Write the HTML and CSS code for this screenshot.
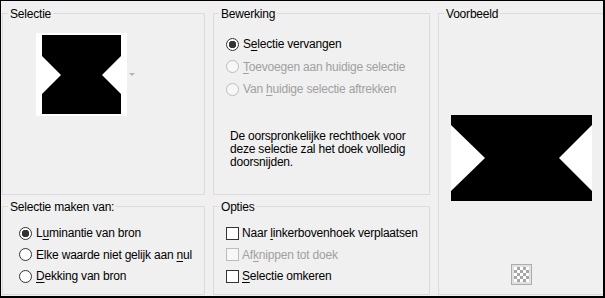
FILE: index.html
```html
<!DOCTYPE html>
<html>
<head>
    <title>Selectie maken</title>
    <meta charset="utf-8">
    <link rel="stylesheet" href="styles.css">
</head>
<body>
    <div class="dialog">
        <section class="group selectie">
            <h2 class="group-title">Selectie</h2>
            <div class="source">
                <svg class="thumb" width="91" height="83" viewBox="0 0 91 83">
                    <rect width="91" height="83" fill="#ffffff"/>
                    <polygon points="6,2 85,2 85,23 66,42 85,61 85,81 6,81 6,61 25,42 6,23" fill="#000000"/>
                </svg>
                <span class="drop-arrow"></span>
            </div>
        </section>

        <section class="group bewerking">
            <h2 class="group-title">Bewerking</h2>
            <div class="options">
                <label class="opt"><span class="radio checked"></span><span>S<u>e</u>lectie vervangen</span></label>
                <label class="opt disabled"><span class="radio"></span><span><u>T</u>oevoegen aan huidige selectie</span></label>
                <label class="opt disabled"><span class="radio"></span><span>Van <u>h</u>uidige selectie aftrekken</span></label>
            </div>
            <p class="note">De oorspronkelijke rechthoek voor<br>deze selectie zal het doek volledig<br>doorsnijden.</p>
        </section>

        <section class="group voorbeeld">
            <h2 class="group-title">Voorbeeld</h2>
            <svg class="preview" width="141" height="86" viewBox="0 0 141 86">
                <rect width="141" height="86" fill="#ffffff"/>
                <polygon points="0,0 141,0 141,10 108,43 141,76 141,86 0,86 0,76 34,43 0,10" fill="#000000"/>
            </svg>
            <button class="checker-btn"><span class="checker"></span></button>
        </section>

        <section class="group maken">
            <h2 class="group-title">Selectie maken van:</h2>
            <div class="options">
                <label class="opt"><span class="radio checked"></span><span>L<u>u</u>minantie van bron</span></label>
                <label class="opt"><span class="radio"></span><span>Elke waarde niet gelijk aan <u>n</u>ul</span></label>
                <label class="opt"><span class="radio"></span><span><u>D</u>ekking van bron</span></label>
            </div>
        </section>

        <section class="group opties">
            <h2 class="group-title">Opties</h2>
            <div class="options">
                <label class="opt"><span class="check"></span><span>Naar <u>l</u>inkerbovenhoek verplaatsen</span></label>
                <label class="opt disabled"><span class="check"></span><span>Af<u>k</u>nippen tot doek</span></label>
                <label class="opt"><span class="check"></span><span><u>S</u>electie omkeren</span></label>
            </div>
        </section>
    </div>
</body>
</html>
```

FILE: styles.css
```css
* {
    margin: 0;
    padding: 0;
    box-sizing: border-box;
}

body {
    background: #f0f0f0;
    font-family: "Liberation Sans", Arial, sans-serif;
    font-size: 12px;
    line-height: 16px;
    letter-spacing: -0.2px;
    color: #000000;
}

.dialog {
    width: 605px;
    height: 298px;
    border-style: solid;
    border-color: #000000;
    border-width: 1px 2px 2px 1px;
    padding: 12px 0 1px 1px;
    overflow: hidden;
    display: grid;
    grid-template-columns: 203px 217px 1fr;
    grid-template-rows: 182px 89px;
    column-gap: 8px;
    row-gap: 11px;
}

.group {
    position: relative;
    border: 1px solid #dcdcdc;
}

.group-title {
    position: absolute;
    top: -8px;
    left: 5px;
    padding: 0 2px;
    background: #f0f0f0;
    font-size: 12px;
    font-weight: normal;
    white-space: nowrap;
}

/* Selectie */
.selectie {
    padding: 19px 0 0 33px;
}

.source {
    display: flex;
    align-items: center;
    gap: 2px;
}

.thumb {
    display: block;
}

.drop-arrow {
    width: 0;
    height: 0;
    border-left: 3px solid transparent;
    border-right: 3px solid transparent;
    border-top: 3px solid #b4b4b4;
}

/* option rows */
.options {
    display: flex;
    flex-direction: column;
}

.opt {
    display: flex;
    align-items: center;
    gap: 4px;
    height: 16px;
    white-space: nowrap;
}

.opt u {
    text-decoration-thickness: 1px;
    text-underline-offset: 2px;
}

.opt.disabled {
    color: #a0a0a0;
}

.radio {
    width: 13px;
    height: 13px;
    border: 1px solid #333333;
    border-radius: 50%;
    background: #ffffff;
    flex-shrink: 0;
}

.radio.checked {
    background: radial-gradient(circle, #333333 0 3.5px, #ffffff 4px);
}

.disabled .radio,
.disabled .check {
    border-color: #bcbcbc;
    background: #f7f7f7;
}

.check {
    width: 13px;
    height: 13px;
    border: 1px solid #333333;
    background: #ffffff;
    flex-shrink: 0;
}

/* Bewerking */
.bewerking {
    padding: 22px 0 0 12px;
}

.bewerking .options {
    gap: 6.5px;
}

.note {
    margin: 33px 0 0 4px;
    line-height: 13px;
}

/* Voorbeeld */
.voorbeeld {
    grid-column: 3;
    grid-row: 1 / span 2;
    margin-right: -2px;
    padding-top: 101px;
    display: flex;
    flex-direction: column;
    align-items: center;
}

.preview {
    display: block;
}

.checker-btn {
    margin-top: 63px;
    width: 21px;
    height: 21px;
    border: 1px solid #adadad;
    background: #e1e1e1;
    display: flex;
    align-items: center;
    justify-content: center;
}

.checker {
    width: 15px;
    height: 15px;
    background: repeating-conic-gradient(#a6a6a6 0 25%, #ffffff 0 50%) 0 0 / 6px 6px;
}

/* Selectie maken van */
.maken {
    padding: 18px 0 0 16px;
}

.maken .options {
    gap: 5.5px;
}

/* Opties */
.opties {
    padding: 18px 0 0 12px;
}

.opties .options {
    gap: 5.5px;
}

.opties .opt {
    gap: 3px;
}
```
